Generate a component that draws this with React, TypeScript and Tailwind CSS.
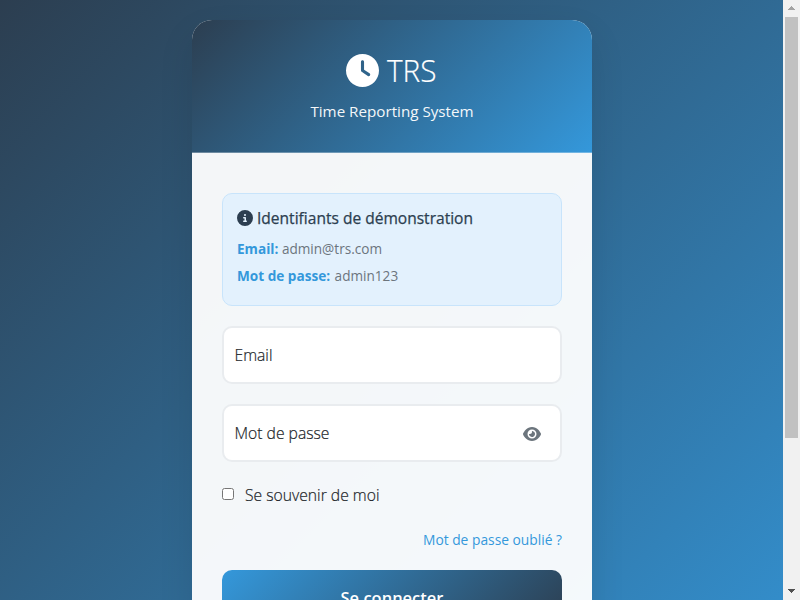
import type { ReactNode } from "react";
import { FaClock, FaCircleInfo, FaEye } from "react-icons/fa6";

function Field({ label, children }: { label: string; children?: ReactNode }) {
  return (
    <div className="flex h-[58px] items-center justify-between rounded-[10px] border-2 border-[#e9ecef] bg-white pl-[10.5px] pr-[19px]">
      <span className="text-[15.7px] font-light text-[#212529] [-webkit-text-stroke:0.2px_#212529]">{label}</span>
      {children}
    </div>
  );
}

function Scrollbar() {
  return (
    <div className="flex w-[17px] shrink-0 flex-col items-center bg-[#f1f1f1]">
      <svg className="h-[17px] w-[17px] shrink-0" viewBox="0 0 17 17" shapeRendering="crispEdges">
        <path d="M8 6h1v1h1v1h1v1h1v1H5V9h1V8h1V7h1z" fill="#a3a3a3" />
      </svg>
      <div className="h-[421px] w-[13px] bg-[#c1c1c1]" />
      <svg className="mt-auto h-[17px] w-[17px] shrink-0" viewBox="0 0 17 17" shapeRendering="crispEdges">
        <path d="M5 6h7v1h-1v1h-1v1H9v1H8V9H7V8H6V7H5z" fill="#505050" />
      </svg>
    </div>
  );
}

export default function App() {
  return (
    <div className="flex h-[600px] w-[800px] overflow-hidden font-['Open_Sans','Noto_Sans',sans-serif] text-[15.2px] font-normal leading-6">
      <div className="h-[806px] w-[783px] shrink-0 bg-[linear-gradient(135deg,#2c3e50_0%,#3498db_100%)] pl-[192px] pt-5">
        <main className="h-[766px] w-[400px] overflow-hidden rounded-[20px] bg-white/95 shadow-[0_15px_35px_rgba(0,0,0,0.1)]">
          <header className="flex h-[133px] flex-col items-center border-b border-white/30 bg-[linear-gradient(135deg,#2c3e50_0%,#3498db_100%)] bg-origin-border pt-[30px] text-white">
            <h1 className="flex h-[40px] items-center gap-2 text-[32px] font-light">
              <FaClock className="h-[33px] w-[33px]" />
              <span className="w-[51px] origin-left scale-x-[0.93] [-webkit-text-stroke:0.2px_white]">TRS</span>
            </h1>
            <p className="mt-[9px] text-[15.2px] opacity-95">Time Reporting System</p>
          </header>
          <div className="flex flex-col px-[30px] pt-[40px]">
            <section className="h-[113px] rounded-[10px] border border-[#c8e4fb] bg-[#e3f1fd] px-[14px] pt-[12px]">
              <h2 className="flex items-center gap-1 text-[15.55px] text-[#2c3e50] [-webkit-text-stroke:0.25px_#2c3e50]">
                <FaCircleInfo className="h-4 w-4" />
                <span>Identifiants de démonstration</span>
              </h2>
              <p className="mt-[8px] text-[13.6px] leading-[21.6px] text-[#6c757d]">
                <strong className="font-bold text-[#3498db]">Email:</strong> admin@trs.com
              </p>
              <p className="mt-[5px] text-[13.6px] leading-[21.6px] text-[#6c757d]">
                <strong className="font-bold text-[#3498db]">Mot de passe:</strong>{" "}
                <span className="ml-px">admin123</span>
              </p>
            </section>
            <div className="mt-5 flex flex-col gap-5">
              <Field label="Email" />
              <Field label="Mot de passe">
                <FaEye className="mt-[2px] h-4 w-[18px] text-[#6c757d]" />
              </Field>
            </div>
            <label className="mt-[21px] flex h-6 items-center text-[15.7px] font-light text-[#212529] [-webkit-text-stroke:0.2px_#212529]">
              <input type="checkbox" className="relative -top-px mr-[11px] h-[12px] w-[12px]" />
              Se souvenir de moi
            </label>
            <a className="mt-[22px] self-end text-[13.8px] leading-[21.6px] text-[#3498db]">Mot de passe oublié ?</a>
            <button className="mt-[19.4px] h-[57px] rounded-[10px] bg-[linear-gradient(135deg,#3498db_0%,#2c3e50_100%)] text-[16.5px] font-semibold text-white">
              Se connecter
            </button>
          </div>
        </main>
      </div>
      <Scrollbar />
    </div>
  );
}
